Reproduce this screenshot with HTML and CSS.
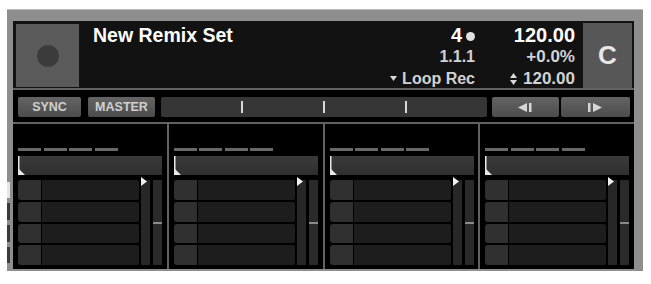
FILE: index.html
```html
<!DOCTYPE html>
<html lang="en">
<head>
    <meta charset="UTF-8">
    <title>Remix Deck</title>
    <link rel="stylesheet" href="styles.css">
</head>
<body>
    <div class="frame">
        <div class="edge">
            <span class="edge-bit light"></span>
            <span class="edge-bit"></span>
            <span class="edge-bit"></span>
            <span class="edge-bit short"></span>
        </div>
        <div class="panel">
            <div class="deck-head">
                <div class="art"><span class="art-dot"></span></div>
                <div class="title">New Remix Set</div>
                <div class="stats stats-pos">
                    <div class="big">4<span class="dot"></span></div>
                    <div class="mid">1.1.1</div>
                    <div class="low">
                        <svg class="caret" width="7" height="5" viewBox="0 0 7 5"><polygon points="0,0 7,0 3.5,5" fill="#d8d8d8"/></svg>Loop Rec
                    </div>
                </div>
                <div class="stats stats-tempo">
                    <div class="big">120.00</div>
                    <div class="mid">+0.0%</div>
                    <div class="low">
                        <svg class="updown" width="7" height="12" viewBox="0 0 7 12"><polygon points="3.5,0 7,5 0,5" fill="#d8d8d8"/><polygon points="0,7 7,7 3.5,12" fill="#d8d8d8"/></svg>120.00
                    </div>
                </div>
                <div class="key">C</div>
            </div>

            <div class="transport">
                <button class="btn btn-sync">SYNC</button>
                <button class="btn btn-master">MASTER</button>
                <div class="phase"><i></i><i></i><i></i></div>
                <button class="btn btn-jump">
                    <svg width="15" height="9" viewBox="0 0 15 9"><polygon points="0,4.5 9,0 9,9" fill="#d6d6d6"/><rect x="11" y="0" width="2.5" height="9" fill="#d6d6d6"/></svg>
                </button>
                <button class="btn btn-jump wide">
                    <svg width="15" height="9" viewBox="0 0 15 9"><rect x="0" y="0" width="2.5" height="9" fill="#d6d6d6"/><polygon points="5,0 14,4.5 5,9" fill="#d6d6d6"/></svg>
                </button>
            </div>

            <div class="slots">
                <div class="slot">
                    <div class="beats"><i></i><i></i><i></i><i></i></div>
                    <div class="wave">
                        <svg class="wave-mark" width="8" height="19" viewBox="0 0 8 19"><rect x="0" y="0" width="1.5" height="19" fill="#e8e8e8"/><polygon points="1,13 1,19 7,19" fill="#e8e8e8"/></svg>
                    </div>
                    <div class="cells">
                        <div class="cell-list">
                            <div class="cell"><span class="cell-key"></span><span class="cell-body"></span></div>
                            <div class="cell"><span class="cell-key"></span><span class="cell-body"></span></div>
                            <div class="cell"><span class="cell-key"></span><span class="cell-body"></span></div>
                            <div class="cell"><span class="cell-key"></span><span class="cell-body"></span></div>
                        </div>
                        <div class="meter">
                            <svg class="meter-mark" width="6" height="9" viewBox="0 0 6 9"><polygon points="0,0 6,4.5 0,9" fill="#f0f0f0"/></svg>
                        </div>
                        <div class="fader"><span class="fader-cap"></span></div>
                    </div>
                </div>
                <div class="slot">
                    <div class="beats"><i></i><i></i><i></i><i></i></div>
                    <div class="wave">
                        <svg class="wave-mark" width="8" height="19" viewBox="0 0 8 19"><rect x="0" y="0" width="1.5" height="19" fill="#e8e8e8"/><polygon points="1,13 1,19 7,19" fill="#e8e8e8"/></svg>
                    </div>
                    <div class="cells">
                        <div class="cell-list">
                            <div class="cell"><span class="cell-key"></span><span class="cell-body"></span></div>
                            <div class="cell"><span class="cell-key"></span><span class="cell-body"></span></div>
                            <div class="cell"><span class="cell-key"></span><span class="cell-body"></span></div>
                            <div class="cell"><span class="cell-key"></span><span class="cell-body"></span></div>
                        </div>
                        <div class="meter">
                            <svg class="meter-mark" width="6" height="9" viewBox="0 0 6 9"><polygon points="0,0 6,4.5 0,9" fill="#f0f0f0"/></svg>
                        </div>
                        <div class="fader"><span class="fader-cap"></span></div>
                    </div>
                </div>
                <div class="slot">
                    <div class="beats"><i></i><i></i><i></i><i></i></div>
                    <div class="wave">
                        <svg class="wave-mark" width="8" height="19" viewBox="0 0 8 19"><rect x="0" y="0" width="1.5" height="19" fill="#e8e8e8"/><polygon points="1,13 1,19 7,19" fill="#e8e8e8"/></svg>
                    </div>
                    <div class="cells">
                        <div class="cell-list">
                            <div class="cell"><span class="cell-key"></span><span class="cell-body"></span></div>
                            <div class="cell"><span class="cell-key"></span><span class="cell-body"></span></div>
                            <div class="cell"><span class="cell-key"></span><span class="cell-body"></span></div>
                            <div class="cell"><span class="cell-key"></span><span class="cell-body"></span></div>
                        </div>
                        <div class="meter">
                            <svg class="meter-mark" width="6" height="9" viewBox="0 0 6 9"><polygon points="0,0 6,4.5 0,9" fill="#f0f0f0"/></svg>
                        </div>
                        <div class="fader"><span class="fader-cap"></span></div>
                    </div>
                </div>
                <div class="slot">
                    <div class="beats"><i></i><i></i><i></i><i></i></div>
                    <div class="wave">
                        <svg class="wave-mark" width="8" height="19" viewBox="0 0 8 19"><rect x="0" y="0" width="1.5" height="19" fill="#e8e8e8"/><polygon points="1,13 1,19 7,19" fill="#e8e8e8"/></svg>
                    </div>
                    <div class="cells">
                        <div class="cell-list">
                            <div class="cell"><span class="cell-key"></span><span class="cell-body"></span></div>
                            <div class="cell"><span class="cell-key"></span><span class="cell-body"></span></div>
                            <div class="cell"><span class="cell-key"></span><span class="cell-body"></span></div>
                            <div class="cell"><span class="cell-key"></span><span class="cell-body"></span></div>
                        </div>
                        <div class="meter">
                            <svg class="meter-mark" width="6" height="9" viewBox="0 0 6 9"><polygon points="0,0 6,4.5 0,9" fill="#f0f0f0"/></svg>
                        </div>
                        <div class="fader"><span class="fader-cap"></span></div>
                    </div>
                </div>
            </div>
        </div>
    </div>
</body>
</html>
```

FILE: styles.css
```css
body {
    margin: 0;
    background: #fff;
    font-family: 'Liberation Sans', Arial, sans-serif;
}
.frame {
    box-sizing: border-box;
    display: flex;
    margin: 9px 0 0 7px;
    width: 636px;
    height: 262px;
    padding: 11px 9px 2px 0;
    background: #8e8e8e;
    border-top: 1px solid #bcbcbc;
}
.edge {
    display: flex;
    flex-direction: column;
    gap: 5px;
    width: 3px;
    margin-right: 3px;
    padding-top: 161px;
}
.edge-bit {
    height: 17px;
    background: #3a3a3a;
}
.edge-bit.light {
    height: 16px;
    background: #e6e6e6;
}
.edge-bit.short {
    height: 16px;
}
.panel {
    flex: 1;
    display: flex;
    flex-direction: column;
    gap: 2px;
    background: #626262;
}

/* header */
.deck-head {
    box-sizing: border-box;
    display: flex;
    align-items: flex-start;
    height: 67px;
    padding: 3px 2px 0 3px;
    background: #121212;
}
.art {
    display: flex;
    align-items: center;
    justify-content: center;
    width: 63px;
    height: 63px;
    background: #5a5a5a;
}
.art-dot {
    width: 22px;
    height: 22px;
    border-radius: 50%;
    background: #3b3b3b;
}
.title {
    flex: 1;
    margin-left: 14px;
    font-size: 19.5px;
    font-weight: bold;
    line-height: 22px;
    color: #fff;
}
.stats {
    text-align: right;
    font-weight: bold;
    color: #d2d2d2;
    white-space: nowrap;
}
.stats-pos {
    margin-right: 28px;
    font-size: 16px;
}
.stats-tempo {
    width: 72px;
    margin-right: 8px;
    font-size: 17px;
}
.big {
    font-size: 20px;
    line-height: 22px;
    color: #fff;
}
.mid {
    line-height: 22px;
}
.low {
    line-height: 21px;
}
.dot {
    display: inline-block;
    width: 9px;
    height: 9px;
    margin-left: 4px;
    border-radius: 50%;
    background: #e0e0e0;
    vertical-align: 1px;
}
.caret {
    margin-right: 5px;
    vertical-align: 3px;
}
.updown {
    margin-right: 6px;
    vertical-align: -1px;
}
.key {
    display: flex;
    align-items: center;
    justify-content: center;
    align-self: stretch;
    width: 49px;
    margin-top: -1px;
    background: #575757;
    font-size: 26px;
    font-weight: bold;
    color: #e6e6e6;
}

/* transport */
.transport {
    box-sizing: border-box;
    display: flex;
    height: 32px;
    padding: 7px 4px 5px 5px;
    background: #000;
}
.btn {
    height: 20px;
    padding: 0;
    border: none;
    border-radius: 2px;
    background: linear-gradient(#646464, #4c4c4c);
    color: #d0d0d0;
    font-family: 'Liberation Sans', Arial, sans-serif;
    font-size: 12.5px;
    font-weight: bold;
}
.btn-sync {
    width: 63px;
}
.btn-master {
    width: 67px;
    margin-left: 7px;
}
.phase {
    display: flex;
    justify-content: space-evenly;
    align-items: center;
    width: 326px;
    margin-left: 6px;
    border-radius: 2px;
    background: #363636;
}
.phase i {
    width: 2px;
    height: 12px;
    background: #d8d8d8;
}
.btn-jump {
    display: flex;
    align-items: center;
    justify-content: center;
    width: 67px;
    margin-left: 5px;
}
.btn-jump.wide {
    width: 69px;
    margin-left: 2px;
}

/* remix slots */
.slots {
    flex: 1;
    display: grid;
    grid-template-columns: repeat(4, 1fr);
    gap: 2px;
}
.slot {
    display: flex;
    flex-direction: column;
    padding: 24px 4.75px 4px 5px;
    background: #000;
}
.beats {
    display: flex;
    gap: 2.5px;
}
.beats i {
    width: 23px;
    height: 3px;
    background: #686868;
}
.wave {
    position: relative;
    height: 19px;
    margin-top: 5px;
    background: linear-gradient(#3a3a3a, #2f2f2f);
}
.wave-mark {
    position: absolute;
    left: 0;
    top: 0;
}
.cells {
    flex: 1;
    display: flex;
    margin-top: 5px;
}
.cell-list {
    flex: 1;
    display: flex;
    flex-direction: column;
    gap: 2px;
}
.cell {
    flex: 1;
    display: flex;
    gap: 1px;
}
.cell-key {
    width: 23px;
    border-radius: 3px 0 0 3px;
    background: #303030;
}
.cell-body {
    flex: 1;
    border-radius: 0 2px 2px 0;
    background: #1d1d1d;
}
.meter {
    position: relative;
    width: 9px;
    margin-left: 2px;
    background: #272727;
}
.meter-mark {
    position: absolute;
    left: 0;
    top: -3px;
}
.fader {
    display: flex;
    flex-direction: column;
    width: 9px;
    margin-left: 3px;
    background: #2a2a2a;
}
.fader-cap {
    height: 2px;
    margin-top: 42px;
    background: #8a8a8a;
}
```
